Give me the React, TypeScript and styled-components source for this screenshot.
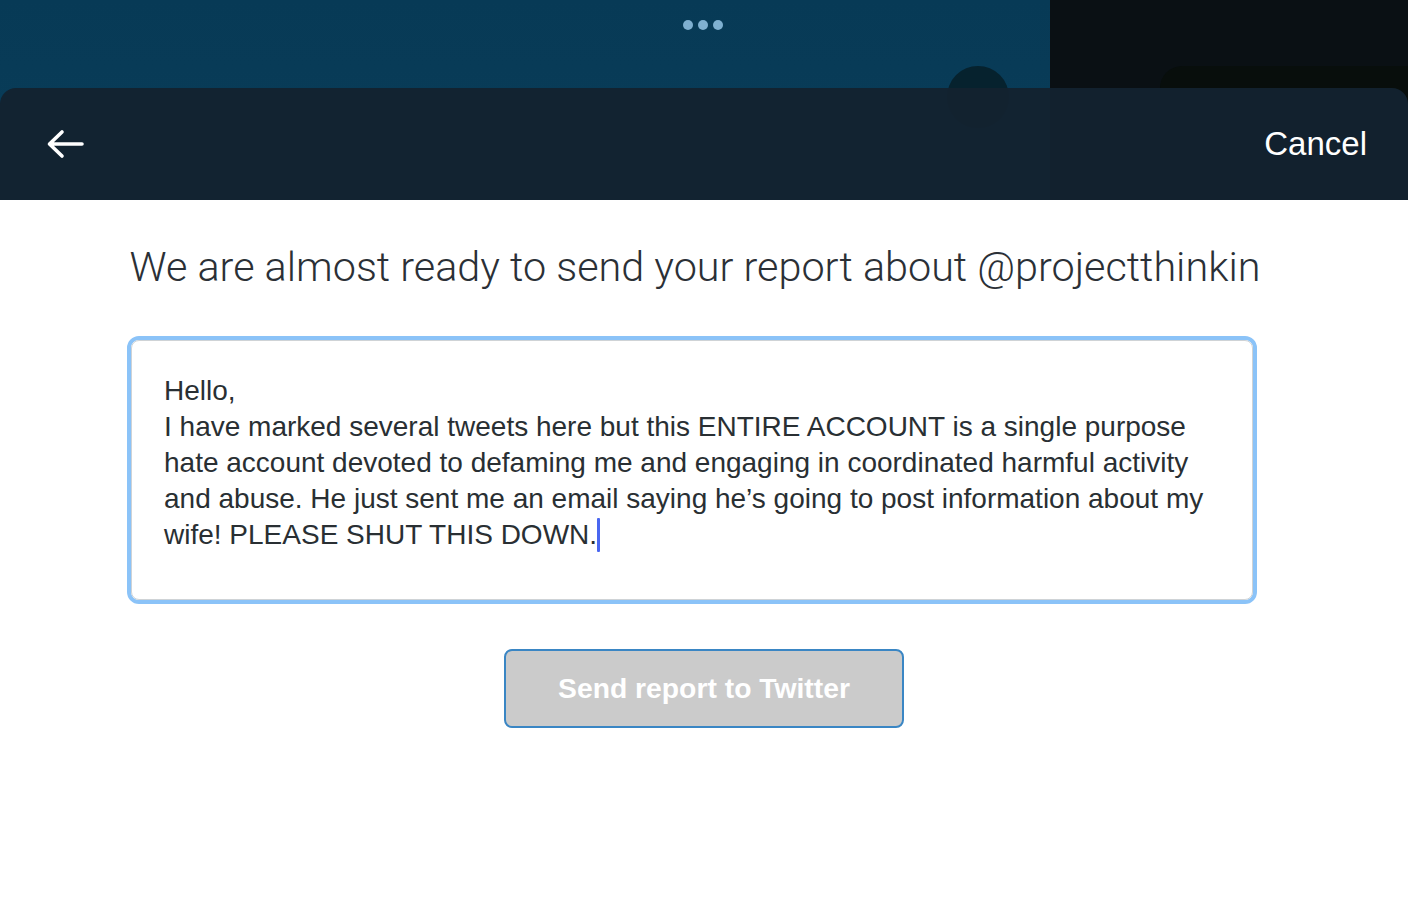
import React from "react";
import styled, { createGlobalStyle } from "styled-components";

const Global = createGlobalStyle`
  html, body { margin: 0; padding: 0; background: #ffffff; }
  body { width: 1408px; height: 918px; overflow: hidden; font-family: "Liberation Sans", Arial, sans-serif; }
`;

const Page = styled.div`
  position: relative;
  width: 1408px;
  height: 918px;
  background: #ffffff;
  overflow: hidden;
`;

const Backdrop = styled.div`
  display: grid;
  grid-template-columns: 1050px 1fr;
  height: 200px;
`;

const BlueSide = styled.div`
  position: relative;
  background: linear-gradient(180deg, #073a56 0%, #0a3d59 100%);
  display: flex;
  justify-content: flex-start;
  padding-top: 20px;
  padding-left: 683px;
  box-sizing: border-box;
`;

const DarkSide = styled.div`
  position: relative;
  background: #0a1014;
`;

const DarkCard = styled.div`
  position: absolute;
  left: 110px;
  top: 66px;
  right: 0;
  bottom: 0;
  border-radius: 22px 0 0 0;
  background: #080e0c;
`;

const Dots = styled.div`
  display: flex;
  gap: 5px;
  height: 10px;
`;

const Dot = styled.span`
  width: 10px;
  height: 10px;
  border-radius: 50%;
  background: #7fb0d0;
`;

const Avatar = styled.div`
  position: absolute;
  left: 947px;
  top: 66px;
  width: 62px;
  height: 62px;
  border-radius: 50%;
  background: #06222e;
`;

const Header = styled.header`
  position: absolute;
  left: 0;
  top: 88px;
  width: 1408px;
  height: 112px;
  border-radius: 16px 16px 0 0;
  background: rgba(19, 34, 47, 0.97);
  display: flex;
  align-items: center;
  justify-content: space-between;
  padding: 0 41px 0 46px;
  box-sizing: border-box;
`;

const BackButton = styled.button`
  background: none;
  border: none;
  padding: 0;
  display: flex;
  cursor: pointer;
`;

const CancelButton = styled.button`
  background: none;
  border: none;
  padding: 0;
  color: #ffffff;
  font-family: "Liberation Sans", Arial, sans-serif;
  font-size: 33px;
  cursor: pointer;
`;

const Body = styled.main`
  display: flex;
  flex-direction: column;
  align-items: center;
  padding-top: 42px;
  padding-right: 24px;
`;

const Title = styled.h1`
  margin: 0 0 0 6px;
  font-family: Roboto, "Liberation Sans", sans-serif;
  font-weight: 300;
  font-size: 41.35px;
  color: #2b3036;
  line-height: 50px;
  white-space: nowrap;
`;

const Field = styled.div`
  margin-top: 44px;
  width: 1130px;
  height: 268px;
  box-sizing: border-box;
  border: 4px solid #8bc3f8;
  border-radius: 12px;
`;

const FieldInner = styled.div`
  height: 100%;
  box-sizing: border-box;
  border: 1px solid #cfd3d6;
  border-radius: 8px;
  padding: 32px 20px 0 32px;
  font-family: "Liberation Sans", Arial, sans-serif;
  font-size: 28px;
  line-height: 36px;
  color: #292f33;
`;

const Line = styled.div`
  white-space: nowrap;
`;

const Caret = styled.span`
  display: inline-block;
  width: 3px;
  height: 34px;
  background: #4a67f0;
  vertical-align: -8px;
  border-radius: 1px;
`;

const SendButton = styled.button`
  margin-top: 45px;
  margin-left: 24px;
  width: 400px;
  height: 79px;
  box-sizing: border-box;
  background: #cbcbcb;
  border: 2px solid #3a86c4;
  border-radius: 8px;
  color: #ffffff;
  font-family: "Liberation Sans", Arial, sans-serif;
  font-weight: 700;
  font-size: 28.3px;
  cursor: pointer;
`;

export default function App() {
  return (
    <Page>
      <Global />
      <Backdrop>
        <BlueSide>
          <Dots>
            <Dot />
            <Dot />
            <Dot />
          </Dots>
        </BlueSide>
        <DarkSide>
          <DarkCard />
        </DarkSide>
      </Backdrop>
      <Avatar />
      <Header>
        <BackButton aria-label="Back">
          <svg width="38" height="30" viewBox="0 0 38 30" fill="none">
            <path
              d="M36 15H4M16 3L3.5 15L16 27"
              stroke="#ffffff"
              strokeWidth="3.6"
              strokeLinecap="round"
              strokeLinejoin="round"
            />
          </svg>
        </BackButton>
        <CancelButton>Cancel</CancelButton>
      </Header>
      <Body>
        <Title>We are almost ready to send your report about @projectthinkin</Title>
        <Field>
          <FieldInner>
            <Line>Hello,</Line>
            <Line>I have marked several tweets here but this ENTIRE ACCOUNT is a single purpose</Line>
            <Line>hate account devoted to defaming me and engaging in coordinated harmful activity</Line>
            <Line>and abuse. He just sent me an email saying he’s going to post information about my</Line>
            <Line>
              wife! PLEASE SHUT THIS DOWN.
              <Caret />
            </Line>
          </FieldInner>
        </Field>
        <SendButton>Send report to Twitter</SendButton>
      </Body>
    </Page>
  );
}
